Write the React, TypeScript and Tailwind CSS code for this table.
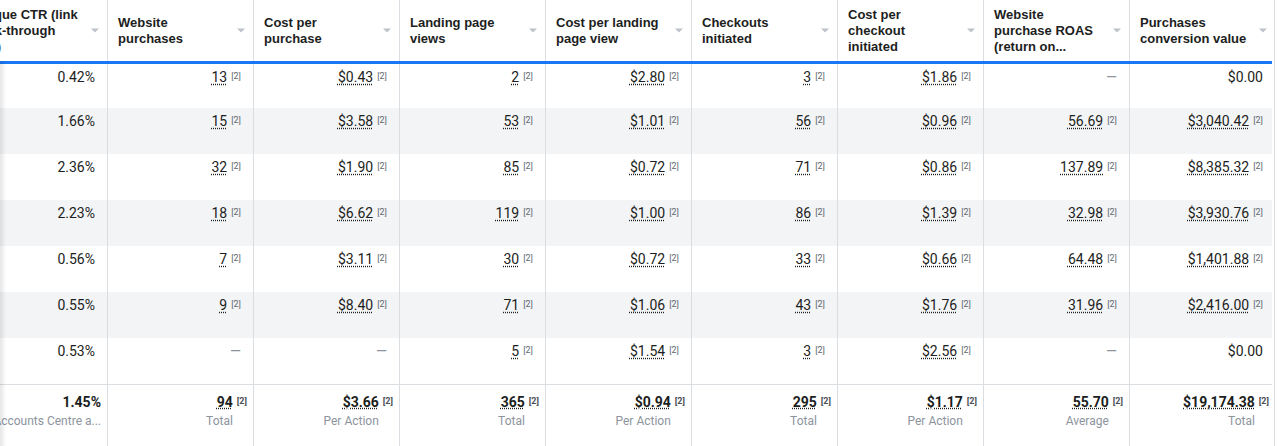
import React from "react";

const headers = [
  "Unique CTR (link click-through rate)",
  "Website purchases",
  "Cost per purchase",
  "Landing page views",
  "Cost per landing page view",
  "Checkouts initiated",
  "Cost per checkout initiated",
  "Website purchase ROAS (return on...",
  "Purchases conversion value",
];

const rows: string[][] = [
  ["0.42%", "13", "$0.43", "2", "$2.80", "3", "$1.86", "—", "$0.00"],
  ["1.66%", "15", "$3.58", "53", "$1.01", "56", "$0.96", "56.69", "$3,040.42"],
  ["2.36%", "32", "$1.90", "85", "$0.72", "71", "$0.86", "137.89", "$8,385.32"],
  ["2.23%", "18", "$6.62", "119", "$1.00", "86", "$1.39", "32.98", "$3,930.76"],
  ["0.56%", "7", "$3.11", "30", "$0.72", "33", "$0.66", "64.48", "$1,401.88"],
  ["0.55%", "9", "$8.40", "71", "$1.06", "43", "$1.76", "31.96", "$2,416.00"],
  ["0.53%", "—", "—", "5", "$1.54", "3", "$2.56", "—", "$0.00"],
];

const footer: [string, string][] = [
  ["1.45%", "Accounts Centre a..."],
  ["94", "Total"],
  ["$3.66", "Per Action"],
  ["365", "Total"],
  ["$0.94", "Per Action"],
  ["295", "Total"],
  ["$1.17", "Per Action"],
  ["55.70", "Average"],
  ["$19,174.38", "Total"],
];

function Caret() {
  return (
    <svg width="8" height="5" viewBox="0 0 8 5" className="shrink-0">
      <path d="M0 0.5h8L4 4.5z" fill="#bec3c9" />
    </svg>
  );
}

function DataCell({ value, col }: { value: string; col: number }) {
  if (value === "—") {
    return <span className="text-[#8d949e]">—</span>;
  }
  if (col === 0 || value === "$0.00") {
    return <span>{value}</span>;
  }
  return (
    <span className="inline-flex items-start">
      <span className="underline decoration-dotted underline-offset-[2px] decoration-[#1c1e21]">
        {value}
      </span>
      <span className="ml-[4px] mt-[3px] text-[9px] leading-[9px] text-[#606770]">[2]</span>
    </span>
  );
}

export default function App() {
  return (
    <div
      className="relative flex h-[446px] w-[1277px] overflow-hidden bg-white text-[#1c1e21]"
      style={{ fontFamily: "Roboto, 'Liberation Sans', sans-serif" }}
    >
      <div className="h-full w-[1272px] overflow-hidden">
        <div className="-ml-[38px] flex w-[1314px] flex-col">
          {/* header */}
          <div className="flex h-[64px] border-b-[3px] border-[#1877f2]">
            {headers.map((h, i) => (
              <div
                key={i}
                className={`flex w-[146px] shrink-0 items-center justify-between border-r border-[#dadde1] pr-[8px] ${
                  i === 0 ? "pl-[11px]" : "pl-[10px]"
                }`}
              >
                <div
                  className="w-[108px] text-[13px] font-bold leading-[16px] text-[#1c1e21]"
                  style={{ fontFamily: "'Liberation Sans', Arial, sans-serif" }}
                >
                  {h}
                </div>
                <Caret />
              </div>
            ))}
          </div>
          {/* body */}
          {rows.map((r, ri) => (
            <div
              key={ri}
              className={`flex ${ri === 0 ? "h-[44px]" : "h-[46px]"} ${
                ri % 2 === 1 ? "bg-[#f3f4f6]" : "bg-white"
              }`}
            >
              {r.map((v, ci) => (
                <div
                  key={ci}
                  className="w-[146px] shrink-0 border-r border-[#dadde1] pr-[12px] pt-[5px] text-right text-[14px] leading-[17px]"
                >
                  <DataCell value={v} col={ci} />
                </div>
              ))}
            </div>
          ))}
          {/* footer */}
          <div className="flex h-[62px] border-t border-[#dadde1] bg-white">
            {footer.map(([v, s], ci) => (
              <div
                key={ci}
                className="flex w-[146px] shrink-0 items-start justify-end overflow-hidden border-r border-[#dadde1] pr-[6px] pt-[9px]"
              >
                <div className="flex flex-col items-end whitespace-nowrap">
                  <span
                    className={`text-[14px] font-bold leading-[17px] ${
                      ci === 0 ? "" : "underline decoration-dotted underline-offset-[1px]"
                    }`}
                  >
                    {v}
                  </span>
                  <span className="mt-[2px] text-[12px] leading-[16px] text-[#8d949e]">{s}</span>
                </div>
                {ci !== 0 && (
                  <span className="ml-[4px] mt-[3px] text-[9px] font-bold leading-[9px] text-[#4b4f56]">
                    [2]
                  </span>
                )}
              </div>
            ))}
          </div>
        </div>
      </div>
      <div className="h-full w-[5px] shrink-0 pl-[2px]">
        <div className="h-full w-px bg-[#dadde1]" />
      </div>
      <div className="pointer-events-none absolute bottom-0 left-0 top-[61px] w-[6px] bg-linear-to-r from-black/10 to-transparent" />
    </div>
  );
}
